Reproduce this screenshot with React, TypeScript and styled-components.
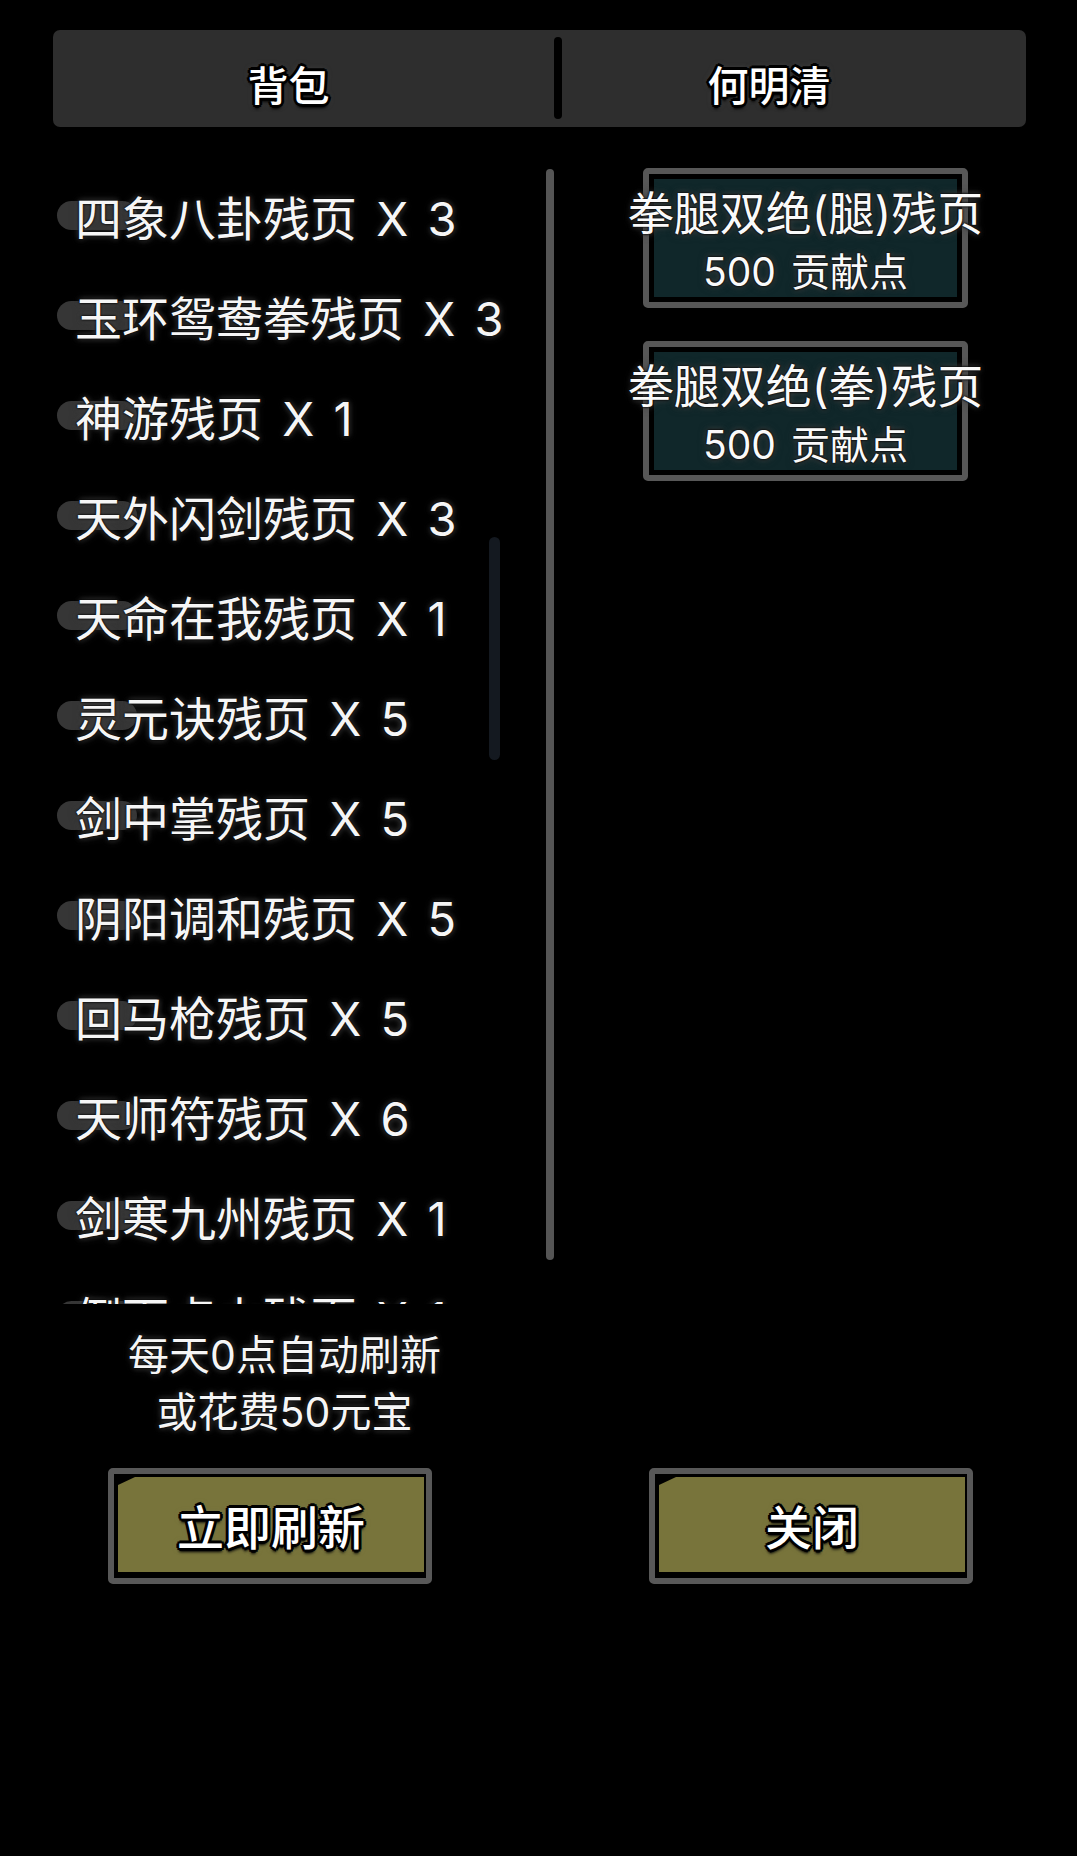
import styled, { createGlobalStyle, css } from 'styled-components'

const GlobalStyle = createGlobalStyle`
  html, body {
    margin: 0;
    padding: 0;
    background: #000;
  }
  body {
    font-family: Inter, "Noto Sans CJK SC", "Noto Sans", sans-serif;
    color: #fff;
  }
`

const outline = css`
  text-shadow:
    3px 0 0 #000, -3px 0 0 #000, 0 3px 0 #000, 0 -3px 0 #000,
    2px 2px 0 #000, -2px 2px 0 #000, 2px -2px 0 #000, -2px -2px 0 #000,
    0 4px 3px #000, 0 0 6px rgba(110, 110, 110, 0.6);
`

const glow = css`
  text-shadow:
    0 0 2px #000, 0 0 3px #000,
    0 0 5px rgba(80, 80, 80, 0.9), 0 0 8px rgba(60, 60, 60, 0.8);
`

const Page = styled.div`
  width: 1077px;
  min-height: 1856px;
  box-sizing: border-box;
  padding: 30px 51px 0 53px;
  background: #000;
`

const TabBar = styled.div`
  height: 97px;
  display: grid;
  grid-template-columns: 501px 8px 1fr;
  background: #2e2e2e;
  border-radius: 7px;
`

const Tab = styled.div<{ $shift: number }>`
  display: flex;
  align-items: center;
  justify-content: center;
  padding: 8px ${(p) => p.$shift}px 0 0;
  font-size: 41px;
  font-weight: 500;
  color: #fff;
  ${outline}
`

const TabDivider = styled.div`
  align-self: center;
  height: 82px;
  margin-top: -2px;
  background: #000;
  border-radius: 4px;
`

const Main = styled.div`
  margin-top: 38px;
  height: 1139px;
  display: grid;
  grid-template-columns: 493px 8px 1fr;
`

const ListView = styled.div`
  position: relative;
  overflow: hidden;
  isolation: isolate;
`

const Row = styled.div`
  position: relative;
  height: 100px;
  display: flex;
  align-items: center;
  padding-left: 22px;
  font-size: 47px;
  word-spacing: 6px;
  color: #f6f6f6;
  white-space: nowrap;
  ${glow}

  &::before {
    content: '';
    position: absolute;
    left: 4px;
    top: 36px;
    width: 80px;
    height: 29px;
    border-radius: 15px;
    background: #363636;
    z-index: -1;
  }
`

const Scrollbar = styled.div`
  position: absolute;
  left: 436px;
  top: 372px;
  width: 11px;
  height: 223px;
  border-radius: 6px;
  background: #141920;
`

const Divider = styled.div`
  align-self: start;
  margin-top: 4px;
  height: 1091px;
  background: #555;
  border-radius: 4px;
`

const ShopColumn = styled.div`
  display: flex;
  flex-direction: column;
  gap: 33px;
  padding: 3px 0 0 89px;
`

const Card = styled.div`
  width: 325px;
  height: 140px;
  box-sizing: border-box;
  border: 6px solid #575757;
  border-radius: 5px;
  padding: 5px;
  background: #000;
`

const CardInner = styled.div`
  height: 100%;
  display: flex;
  flex-direction: column;
  align-items: center;
  padding-top: 8px;
  box-sizing: border-box;
  background: #10272a;
`

const CardTitle = styled.div`
  font-size: 46px;
  line-height: 52px;
  white-space: nowrap;
  color: #fafafa;
  ${glow}
`

const CardPrice = styled.div`
  margin-top: 10px;
  font-size: 39px;
  line-height: 46px;
  word-spacing: 4px;
  white-space: nowrap;
  color: #fafafa;
  ${glow}
`

const Notice = styled.div`
  width: 493px;
  box-sizing: border-box;
  padding-right: 30px;
  margin-top: 23px;
  text-align: center;
  font-size: 41px;
  line-height: 57px;
  color: #f6f6f6;
  ${glow}
`

const ButtonRow = styled.div`
  display: flex;
  gap: 217px;
  margin-top: 27px;
  padding-left: 55px;
`

const Button = styled.div`
  width: 324px;
  height: 116px;
  box-sizing: border-box;
  border: 6px solid #585858;
  border-radius: 5px;
  padding: 3px 2px 6px 4px;
  background: #000;
`

const ButtonFace = styled.div`
  height: 100%;
  display: flex;
  align-items: center;
  justify-content: center;
  background: #78743b;
  clip-path: polygon(17px 0, 100% 0, 100% 100%, 0 100%, 0 8px);
  font-size: 47px;
  font-weight: 500;
  color: #fff;
  ${outline}
`

const items = [
  '四象八卦残页 X 3',
  '玉环鸳鸯拳残页 X 3',
  '神游残页 X 1',
  '天外闪剑残页 X 3',
  '天命在我残页 X 1',
  '灵元诀残页 X 5',
  '剑中掌残页 X 5',
  '阴阳调和残页 X 5',
  '回马枪残页 X 5',
  '天师符残页 X 6',
  '剑寒九州残页 X 1',
  '倒下点火残页 X 1'
]

const goods = [
  { name: '拳腿双绝(腿)残页', price: '500 贡献点' },
  { name: '拳腿双绝(拳)残页', price: '500 贡献点' }
]

export default function App() {
  return (
    <Page>
      <GlobalStyle />
      <TabBar>
        <Tab $shift={30}>背包</Tab>
        <TabDivider />
        <Tab $shift={50}>何明清</Tab>
      </TabBar>

      <Main>
        <ListView>
          {items.map((item) => (
            <Row key={item}>{item}</Row>
          ))}
          <Scrollbar />
        </ListView>
        <Divider />
        <ShopColumn>
          {goods.map((g) => (
            <Card key={g.name}>
              <CardInner>
                <CardTitle>{g.name}</CardTitle>
                <CardPrice>{g.price}</CardPrice>
              </CardInner>
            </Card>
          ))}
        </ShopColumn>
      </Main>

      <Notice>
        每天0点自动刷新
        <br />
        或花费50元宝
      </Notice>

      <ButtonRow>
        <Button>
          <ButtonFace>立即刷新</ButtonFace>
        </Button>
        <Button>
          <ButtonFace>关闭</ButtonFace>
        </Button>
      </ButtonRow>
    </Page>
  )
}
